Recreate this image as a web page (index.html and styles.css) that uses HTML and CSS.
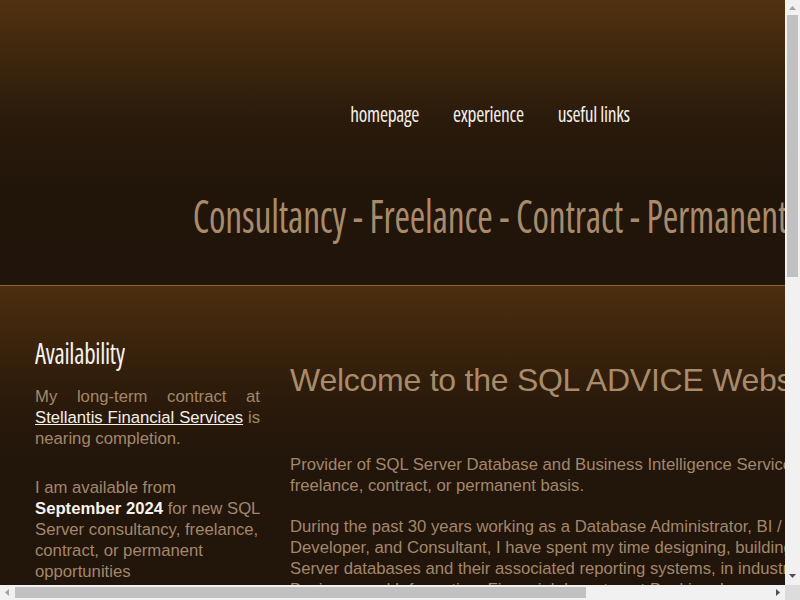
FILE: index.html
```html
<!DOCTYPE html>
<html lang="en">
<head>
<meta charset="utf-8">
<title>SQL ADVICE</title>
<link rel="stylesheet" href="styles.css">
</head>
<body>
<div class="page">
  <header class="header">
    <nav class="nav">
      <a href="#">homepage</a>
      <a href="#">experience</a>
      <a href="#">useful links</a>
    </nav>
    <h1 class="tagline">Consultancy - Freelance - Contract - Permanent</h1>
  </header>
  <main class="content">
    <aside class="sidebar">
      <h2 class="side-title">Availability</h2>
      <p class="side-text justify">My long-term contract at <a href="#">Stellantis Financial Services</a> is nearing completion.</p>
      <p class="side-text">I am available from <strong>September 2024</strong> for new SQL Server consultancy, freelance, contract, or permanent opportunities</p>
      <p class="side-text">Please get in touch to discuss your requirements.</p>
    </aside>
    <section class="article">
      <h2 class="welcome">Welcome to the SQL ADVICE Website</h2>
      <p>Provider of SQL Server Database and Business Intelligence Services on a consultancy, freelance, contract, or permanent basis.</p>
      <p>During the past 30 years working as a Database Administrator, BI / Data Warehouse Developer, and Consultant, I have spent my time designing, building and tuning SQL Server databases and their associated reporting systems, in industries such as Business and Information, Financial, Investment Banking, Insurance, Manufacturing, Retail, Telecommunications and the Public Sector.</p>
      <p>My experience covers all versions of SQL Server from 6.5 through to 2022, including SQL Server Integration Services (SSIS), SQL Server Reporting Services (SSRS), SQL Server Analysis Services (SSAS), Power BI and Azure SQL Database.</p>
      <p>Services offered include database design and development, performance tuning and optimisation, high availability and disaster recovery, migrations and upgrades, data warehouse design, ETL development, report development, and general health checks of existing SQL Server estates.</p>
      <p>Whether you need short-term help with a specific problem, or a longer-term engagement as part of your team, please use the links above to find out more about my experience, or get in touch to discuss how I can help.</p>
    </section>
  </main>
</div>

<div class="vscroll" aria-hidden="true">
  <svg class="arrow arrow-up" width="15" height="15" viewBox="0 0 15 15"><polygon points="4,10 11,10 7.5,6" fill="#a3a3a3"/></svg>
  <div class="vthumb"></div>
  <svg class="arrow arrow-down" width="15" height="15" viewBox="0 0 15 15"><polygon points="4,4 11,4 7.5,8" fill="#505050"/></svg>
</div>
<div class="hscroll" aria-hidden="true">
  <svg class="arrow arrow-left" width="15" height="15" viewBox="0 0 15 15"><polygon points="9,4 9,11 5,7.5" fill="#a3a3a3"/></svg>
  <div class="hthumb"></div>
  <svg class="arrow arrow-right" width="15" height="15" viewBox="0 0 15 15"><polygon points="6,4 6,11 10,7.5" fill="#505050"/></svg>
</div>
<div class="scroll-corner" aria-hidden="true"></div>
</body>
</html>
```
FILE: styles.css
```css
html, body {
  margin: 0;
  padding: 0;
  background: #21150a;
}
body {
  font-family: "Liberation Sans", Arial, sans-serif;
  font-size: 16.7px;
  line-height: 21px;
  color: #a3876a;
}
.page {
  width: 1038px;
}
.header {
  height: 285px;
  border-bottom: 1px solid #94602a;
  background: linear-gradient(to bottom, #50320f 0px, #2a1a0b 120px, #21150a 190px, #21140a 285px);
  display: flex;
  flex-direction: column;
  align-items: center;
  width: 980px;
  padding-right: 58px;
  box-sizing: content-box;
}
.nav {
  display: flex;
  gap: 34px;
  margin-top: 99px;
}
.nav a {
  font-family: "Open Sans", sans-serif;
  font-stretch: 75%;
  font-weight: 500;
  font-size: 19.5px;
  line-height: 30px;
  color: #f3efe9;
  text-decoration: none;
  letter-spacing: -0.3px;
  display: inline-block;
  transform: scaleY(1.1);
}
.tagline {
  margin: 62px 0 0;
  font-family: "Open Sans", sans-serif;
  font-stretch: 75%;
  font-weight: 400;
  font-size: 37.5px;
  line-height: 50px;
  color: #a88b6a;
  white-space: nowrap;
  letter-spacing: -0.2px;
  transform: scaleY(1.22);
}
.content {
  display: flex;
  gap: 30px;
  padding: 36px 68px 40px 35px;
  background: linear-gradient(to bottom, #4b2e0e 0px, #2e1c0b 100px, #22150a 170px, #21140a 400px);
}
.sidebar {
  flex: 0 0 225px;
}
.side-title {
  margin: 10px 0 14px;
  font-family: "Open Sans", sans-serif;
  font-stretch: 75%;
  font-weight: 500;
  font-size: 25px;
  line-height: 40px;
  color: #f5f1ec;
  letter-spacing: -0.3px;
  transform: scaleY(1.17);
}
.side-text {
  margin: 0 0 28px;
}
.justify {
  text-align: justify;
}
.sidebar a {
  color: #f3efe9;
  text-decoration: underline;
}
.sidebar strong {
  color: #f5f1ec;
  font-weight: bold;
}
.article {
  flex: 0 0 645px;
  padding-top: 40px;
}
.welcome {
  margin: 0 0 56px;
  font-family: "Liberation Sans", Arial, sans-serif;
  font-weight: 400;
  font-size: 32px;
  line-height: 36px;
  color: #a88b6a;
  white-space: nowrap;
  letter-spacing: -0.25px;
}
.article p {
  margin: 0 0 20px;
}

/* browser-style scrollbars drawn over the page edge */
.vscroll {
  position: fixed;
  top: 0;
  right: 0;
  width: 15px;
  height: 585px;
  background: #f1f1f1;
  display: flex;
  flex-direction: column;
  align-items: center;
}
.vthumb {
  width: 11px;
  height: 262px;
  background: #c1c1c1;
  margin-bottom: auto;
}
.hscroll {
  position: fixed;
  left: 0;
  bottom: 0;
  width: 785px;
  height: 15px;
  background: #f1f1f1;
  display: flex;
  align-items: center;
}
.hthumb {
  width: 571px;
  height: 11px;
  background: #c1c1c1;
  margin-right: auto;
}
.arrow {
  display: block;
  flex: 0 0 15px;
}
.scroll-corner {
  position: fixed;
  right: 0;
  bottom: 0;
  width: 15px;
  height: 15px;
  background: #dcdcdc;
}
```
